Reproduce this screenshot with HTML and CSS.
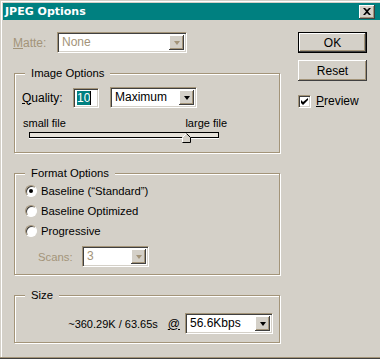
FILE: index.html
```html
<!DOCTYPE html>
<html lang="en">
<head>
    <meta charset="UTF-8">
    <title>JPEG Options</title>
    <link rel="stylesheet" href="styles.css">
</head>
<body>

    <div class="window">
        <div class="titlebar">
            <span class="title">JPEG Options</span>
            <button class="close-btn">
                <svg width="8" height="7" viewBox="0 0 8 7"><path d="M0 0h2l2 2 2-2h2L5 3.5 8 7H6L4 5 2 7H0l3-3.5z" fill="#000"/></svg>
            </button>
        </div>

        <div class="dialog">
            <div class="main">

                <!-- Matte -->
                <div class="matte-row">
                    <span class="matte-label disabled"><u>M</u>atte:</span>
                    <div class="combo combo-matte is-disabled">
                        <span class="combo-value">None</span>
                        <span class="combo-arrow"><i></i></span>
                    </div>
                </div>

                <!-- Image Options -->
                <div class="group group-image">
                    <div class="legend">Image Options</div>
                    <div class="quality-row">
                        <span class="quality-label"><u>Q</u>uality:</span>
                        <div class="text-field"><span class="selected">10</span><span class="caret"></span></div>
                        <div class="combo combo-quality">
                            <span class="combo-value">Maximum</span>
                            <span class="combo-arrow"><i></i></span>
                        </div>
                    </div>
                    <div class="tick-labels">
                        <span>small file</span>
                        <span>large file</span>
                    </div>
                    <div class="slider">
                        <svg class="thumb" width="9" height="10" viewBox="0 0 9 10">
                            <polygon points="0.5,9.5 0.5,4.5 4.5,0.5 8.5,4.5 8.5,9.5" fill="#d4d0c8"/>
                            <path d="M0.5 9V4.5L4.5 0.5" stroke="#fff" fill="none"/>
                            <path d="M4.5 0.5L8.5 4.5V9.5H0.5" stroke="#000" fill="none"/>
                        </svg>
                    </div>
                </div>

                <!-- Format Options -->
                <div class="group group-format">
                    <div class="legend">Format Options</div>
                    <div class="radio-list">
                        <div class="radio-row">
                            <span class="radio checked"></span>
                            <span class="radio-text">Baseline (&ldquo;Standard&rdquo;)</span>
                        </div>
                        <div class="radio-row">
                            <span class="radio"></span>
                            <span class="radio-text">Baseline Optimized</span>
                        </div>
                        <div class="radio-row">
                            <span class="radio"></span>
                            <span class="radio-text">Progressive</span>
                        </div>
                    </div>
                    <div class="scans-row">
                        <span class="scans-label disabled">Scans:</span>
                        <div class="combo combo-scans is-disabled">
                            <span class="combo-value">3</span>
                            <span class="combo-arrow"><i></i></span>
                        </div>
                    </div>
                </div>

                <!-- Size -->
                <div class="group group-size">
                    <div class="legend">Size</div>
                    <div class="size-row">
                        <span class="size-info">~360.29K / 63.65s</span>
                        <span class="at"><u>@</u></span>
                        <div class="combo combo-speed">
                            <span class="combo-value">56.6Kbps</span>
                            <span class="combo-arrow"><i></i></span>
                        </div>
                    </div>
                </div>
            </div>

            <div class="side">
                <button class="btn btn-default">OK</button>
                <button class="btn btn-reset">Reset</button>
                <div class="preview-row">
                    <span class="checkbox">
                        <svg width="7" height="7" viewBox="0 0 7 7"><path d="M0 2v3l2 2 5-5V0L2 4z" fill="#000"/></svg>
                    </span>
                    <span class="preview-label"><u>P</u>review</span>
                </div>
            </div>
        </div>
    </div>

</body>
</html>
```

FILE: styles.css
```css
* {
    box-sizing: border-box;
}

body {
    margin: 0;
    font-family: "Liberation Sans", Arial, sans-serif;
    font-size: 11.3px;
    color: #000;
    background: #d4d0c8;
}

u {
    text-decoration: underline;
    text-underline-offset: 1px;
}

.window {
    width: 380px;
    height: 359px;
    overflow: hidden;
    background: #d4d0c8;
    box-shadow: inset 0 -1px #404040, inset 0 -2px #a39479, inset 1px 1px #d4d0c8, inset 2px 2px #fff;
}

.titlebar {
    display: flex;
    align-items: center;
    height: 17px;
    margin: 3px 0 0 3px;
    padding-left: 2px;
    background: #008080;
}

.title {
    font-family: "DejaVu Sans", sans-serif;
    font-weight: bold;
    font-size: 11px;
    color: #fff;
}

.close-btn {
    display: flex;
    align-items: center;
    justify-content: center;
    width: 16px;
    height: 14px;
    margin-left: auto;
    margin-right: 5px;
    padding: 0;
    border: none;
    background: #d4d0c8;
    box-shadow: inset -1px -1px #404040, inset 1px 1px #fff, inset -2px -2px #a39479;
}

.dialog {
    display: flex;
    padding-top: 12px;
}

.main {
    width: 267px;
    margin-left: 13px;
}

.disabled {
    color: #a39479;
}

/* combo boxes */
.combo {
    display: flex;
    align-items: center;
    height: 21px;
    padding: 2px;
    background: #fff;
    border: 1px solid;
    border-color: #a39479 #fff #fff #a39479;
    box-shadow: inset 1px 1px #404040, inset -1px -1px #d4d0c8;
}

.combo-value {
    flex: 1;
    padding-left: 2px;
    line-height: 15px;
    font-size: 12px;
}

.combo-arrow {
    display: flex;
    align-items: center;
    justify-content: center;
    width: 15px;
    height: 100%;
    background: #d4d0c8;
    box-shadow: inset -1px -1px #404040, inset 1px 1px #fff, inset -2px -2px #a39479;
}

.combo-arrow i {
    width: 0;
    height: 0;
    border-left: 3.5px solid transparent;
    border-right: 3.5px solid transparent;
    border-top: 4px solid #000;
}

.is-disabled .combo-value {
    color: #a39479;
}

.is-disabled .combo-arrow i {
    border-top-color: #a39479;
}

.matte-row {
    display: flex;
    align-items: center;
    height: 21px;
}

.matte-label {
    width: 44px;
    font-size: 12px;
}

.combo-matte {
    width: 130px;
}

/* group boxes */
.group {
    width: 266px;
    margin-left: 1px;
    border: 1px solid #a39479;
    box-shadow: inset 1px 1px #fff, 1px 1px #fff;
}

.legend {
    display: table;
    margin: -8px 0 0 10px;
    padding: 0 6px;
    line-height: 14px;
    background: #d4d0c8;
}

.group-image {
    height: 80px;
    margin-top: 20px;
}

.quality-row {
    display: flex;
    align-items: center;
    height: 21px;
    margin-top: 7px;
    padding-left: 7px;
    font-size: 12px;
}

.quality-label {
    width: 51px;
}

.text-field {
    display: flex;
    align-items: center;
    width: 26px;
    height: 20px;
    padding: 2px 3px;
    background: #fff;
    border: 1px solid;
    border-color: #a39479 #fff #fff #a39479;
    box-shadow: inset 1px 1px #404040, inset -1px -1px #d4d0c8;
}

.selected {
    background: #008080;
    color: #fff;
    line-height: 14px;
}

.caret {
    width: 1px;
    height: 14px;
    background: #000;
}

.combo-quality {
    width: 87px;
    margin-left: 11px;
}

.tick-labels {
    display: flex;
    justify-content: space-between;
    width: 204px;
    margin: 8px 0 0 8px;
    line-height: 14px;
    font-size: 11px;
}

.slider {
    position: relative;
    width: 190px;
    height: 6px;
    margin: 2px 0 0 14px;
    background: #e6e2da;
    border: 1px solid #000;
    box-shadow: 0 1px #fff;
}

.slider .thumb {
    position: absolute;
    left: 152px;
    top: 0;
}

.group-format {
    height: 102px;
    margin-top: 20px;
}

.radio-list {
    margin-top: 1px;
}

.radio-row {
    display: flex;
    align-items: center;
    height: 20px;
    padding-left: 10px;
}

.radio {
    position: relative;
    width: 12px;
    height: 12px;
    border-radius: 50%;
    background: #fff;
    border: 1px solid;
    border-color: #a39479 #fff #fff #a39479;
    box-shadow: inset 1px 1px #404040;
}

.radio.checked::after {
    content: "";
    position: absolute;
    left: 3px;
    top: 3px;
    width: 4px;
    height: 4px;
    border-radius: 50%;
    background: #000;
}

.radio-text {
    margin-left: 4px;
}

.scans-row {
    display: flex;
    align-items: center;
    height: 21px;
    margin-top: 5px;
    padding-left: 23px;
}

.scans-label {
    width: 44px;
}

.combo-scans {
    width: 67px;
}

.group-size {
    height: 48px;
    margin-top: 20px;
}

.size-row {
    display: flex;
    align-items: center;
    justify-content: flex-end;
    height: 21px;
    margin-top: 11px;
    padding-right: 6px;
}

.size-info {
    margin-right: 10px;
    font-size: 11px;
}

.at {
    margin-right: 5px;
    font-size: 12px;
}

.combo-speed {
    width: 88px;
}

/* right column */
.side {
    width: 69px;
    margin-left: 18px;
}

.btn {
    display: block;
    width: 69px;
    height: 21px;
    padding: 0;
    border: none;
    background: #d4d0c8;
    font-family: inherit;
    font-size: 12px;
    color: #000;
    box-shadow: inset -1px -1px #404040, inset 1px 1px #fff, inset -2px -2px #a39479;
}

.btn-default {
    border: 1px solid #000;
}

.btn-reset {
    margin-top: 7px;
}

.preview-row {
    display: flex;
    align-items: center;
    margin-top: 13px;
    font-size: 12px;
}

.checkbox {
    display: flex;
    align-items: center;
    justify-content: center;
    width: 13px;
    height: 13px;
    background: #fff;
    border: 1px solid;
    border-color: #a39479 #fff #fff #a39479;
    box-shadow: inset 1px 1px #404040, inset -1px -1px #d4d0c8;
}

.preview-label {
    margin-left: 5px;
}
```
